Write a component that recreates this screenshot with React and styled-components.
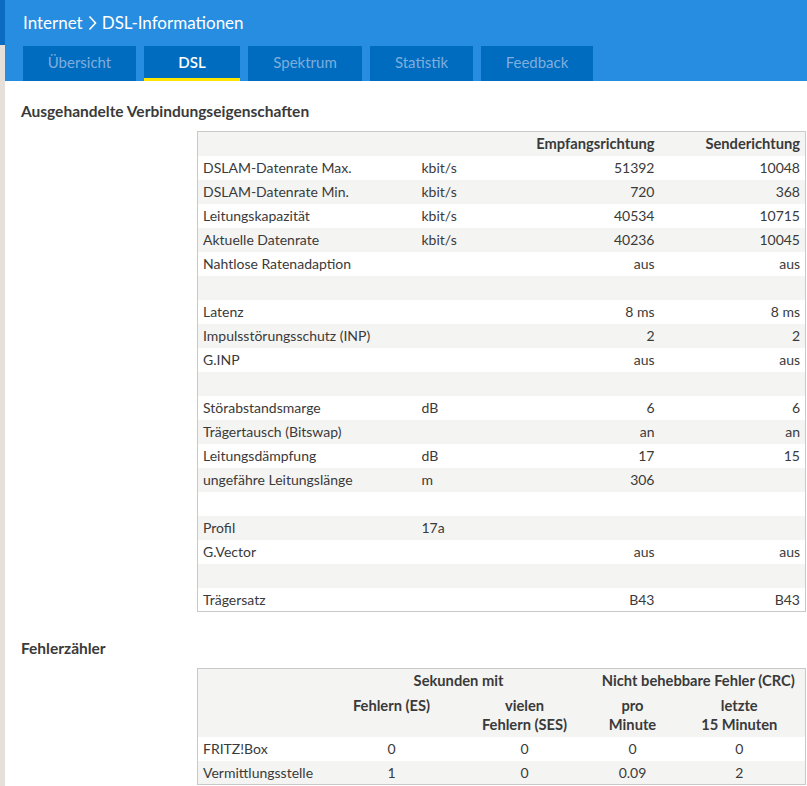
import React from "react";
import styled, { createGlobalStyle } from "styled-components";

const GlobalStyle = createGlobalStyle`
    body {
        margin: 0;
        background: #ffffff;
        font-family: Lato, "Noto Sans", sans-serif;
        color: #3a3a3a;
    }
`;

const Page = styled.div`
    display: flex;
    min-height: 100vh;
`;
const SideStrip = styled.div`
    width: 5px;
    flex-shrink: 0;
    background: #e5e1da;
`;
const SideTop = styled.div`
    height: 45px;
    background: #0b6cc2;
`;
const Main = styled.div`
    flex: 1;
    min-width: 0;
`;
const Header = styled.header`
    background: #278de0;
    height: 81px;
    display: flex;
    flex-direction: column;
    justify-content: space-between;
`;
const Title = styled.h1`
    margin: 0;
    padding: 12px 0 0 18px;
    display: flex;
    align-items: center;
    gap: 5px;
    font-size: 17px;
    font-weight: 400;
    color: #ffffff;
    line-height: 22px;
`;
const TabBar = styled.nav`
    display: flex;
    gap: 8px;
    padding-left: 18px;
`;
const Tab = styled.div`
    width: ${(p) => p.$w}px;
    height: 35px;
    box-sizing: border-box;
    display: flex;
    align-items: center;
    justify-content: center;
    background: #006cbf;
    color: ${(p) => (p.$active ? "#ffffff" : "#7eaedd")};
    font-size: 15px;
    font-weight: ${(p) => (p.$active ? 600 : 400)};
    border-bottom: 3px solid ${(p) => (p.$active ? "#ffe600" : "transparent")};
    padding-bottom: 1px;
`;
const Content = styled.main`
    padding: 20px 2px 0 16px;
`;
const SectionTitle = styled.h2`
    margin: 0;
    font-size: 15.5px;
    font-weight: 700;
    color: #3a3a3a;
    line-height: 20px;
`;
const Table = styled.table`
    margin: ${(p) => p.$mt}px 0 0 176px;
    width: calc(100% - 176px);
    border: 1px solid #c9c9c9;
    border-collapse: collapse;
    table-layout: fixed;
    font-size: 14px;
    color: #3a3a3a;
`;
const Row = styled.tr`
    background: ${(p) => (p.$shade ? "#f4f4f3" : "#ffffff")};
    height: ${(p) => p.$h || 24}px;
`;
const Cell = styled.td`
    padding: 0 5px;
    line-height: 19px;
    text-align: ${(p) => p.$align || "left"};
    font-weight: ${(p) => (p.$head ? 700 : 400)};
    font-size: ${(p) => (p.$head ? "14.7px" : "14px")};
    white-space: nowrap;
    vertical-align: ${(p) => p.$valign || "middle"};
    padding-top: ${(p) => (p.$valign === "top" ? "3px" : "0")};
`;
const ErrorTitle = styled(SectionTitle)`
    margin-top: 26px;
`;

const Chevron = () => (
    <svg width="9" height="16" viewBox="0 0 9 16" fill="none">
        <path d="M1.5 1.5 L7.5 8 L1.5 14.5" stroke="#ffffff" strokeWidth="1.6" />
    </svg>
);

const tabs = [
    { label: "Übersicht", w: 113 },
    { label: "DSL", w: 96, active: true },
    { label: "Spektrum", w: 114 },
    { label: "Statistik", w: 103 },
    { label: "Feedback", w: 112 },
];

const rows = [
    ["DSLAM-Datenrate Max.", "kbit/s", "51392", "10048"],
    ["DSLAM-Datenrate Min.", "kbit/s", "720", "368"],
    ["Leitungskapazität", "kbit/s", "40534", "10715"],
    ["Aktuelle Datenrate", "kbit/s", "40236", "10045"],
    ["Nahtlose Ratenadaption", "", "aus", "aus"],
    ["", "", "", ""],
    ["Latenz", "", "8 ms", "8 ms"],
    ["Impulsstörungsschutz (INP)", "", "2", "2"],
    ["G.INP", "", "aus", "aus"],
    ["", "", "", ""],
    ["Störabstandsmarge", "dB", "6", "6"],
    ["Trägertausch (Bitswap)", "", "an", "an"],
    ["Leitungsdämpfung", "dB", "17", "15"],
    ["ungefähre Leitungslänge", "m", "306", ""],
    ["", "", "", ""],
    ["Profil", "17a", "", ""],
    ["G.Vector", "", "aus", "aus"],
    ["", "", "", ""],
    ["Trägersatz", "", "B43", "B43"],
];

const errors = [
    ["FRITZ!Box", "0", "0", "0", "0"],
    ["Vermittlungsstelle", "1", "0", "0.09", "2"],
];

const App = () => {
    return (
        <Page>
            <GlobalStyle />
            <SideStrip>
                <SideTop />
            </SideStrip>
            <Main>
                <Header>
                    <Title>
                        Internet <Chevron /> DSL-Informationen
                    </Title>
                    <TabBar>
                        {tabs.map((t) => (
                            <Tab key={t.label} $w={t.w} $active={t.active}>
                                {t.label}
                            </Tab>
                        ))}
                    </TabBar>
                </Header>
                <Content>
                    <SectionTitle>Ausgehandelte Verbindungseigenschaften</SectionTitle>
                    <Table $mt={10}>
                        <colgroup>
                            <col style={{ width: 219 }} />
                            <col style={{ width: 104 }} />
                            <col style={{ width: 139 }} />
                            <col style={{ width: 146 }} />
                        </colgroup>
                        <thead>
                            <Row $shade>
                                <Cell />
                                <Cell />
                                <Cell $head $align="right">Empfangsrichtung</Cell>
                                <Cell $head $align="right">Senderichtung</Cell>
                            </Row>
                        </thead>
                        <tbody>
                            {rows.map((r, i) => (
                                <Row key={i} $shade={i % 2 === 1}>
                                    <Cell>{r[0]}</Cell>
                                    <Cell>{r[1]}</Cell>
                                    <Cell $align="right">{r[2]}</Cell>
                                    <Cell $align="right">{r[3]}</Cell>
                                </Row>
                            ))}
                        </tbody>
                    </Table>

                    <ErrorTitle>Fehlerzähler</ErrorTitle>
                    <Table $mt={10}>
                        <colgroup>
                            <col style={{ width: 128 }} />
                            <col style={{ width: 132 }} />
                            <col style={{ width: 134 }} />
                            <col style={{ width: 82 }} />
                            <col style={{ width: 132 }} />
                        </colgroup>
                        <thead>
                            <Row $shade>
                                <Cell />
                                <Cell $head $align="center" colSpan={2}>Sekunden mit</Cell>
                                <Cell $head $align="center" colSpan={2}>Nicht behebbare Fehler (CRC)</Cell>
                            </Row>
                            <Row $shade $h={44}>
                                <Cell />
                                <Cell $head $align="center" $valign="top">Fehlern (ES)</Cell>
                                <Cell $head $align="center" $valign="top">vielen<br />Fehlern (SES)</Cell>
                                <Cell $head $align="center" $valign="top">pro<br />Minute</Cell>
                                <Cell $head $align="center" $valign="top">letzte<br />15 Minuten</Cell>
                            </Row>
                        </thead>
                        <tbody>
                            {errors.map((r, i) => (
                                <Row key={r[0]} $shade={i % 2 === 1}>
                                    <Cell>{r[0]}</Cell>
                                    <Cell $align="center">{r[1]}</Cell>
                                    <Cell $align="center">{r[2]}</Cell>
                                    <Cell $align="center">{r[3]}</Cell>
                                    <Cell $align="center">{r[4]}</Cell>
                                </Row>
                            ))}
                        </tbody>
                    </Table>
                </Content>
            </Main>
        </Page>
    );
};

export default App;
